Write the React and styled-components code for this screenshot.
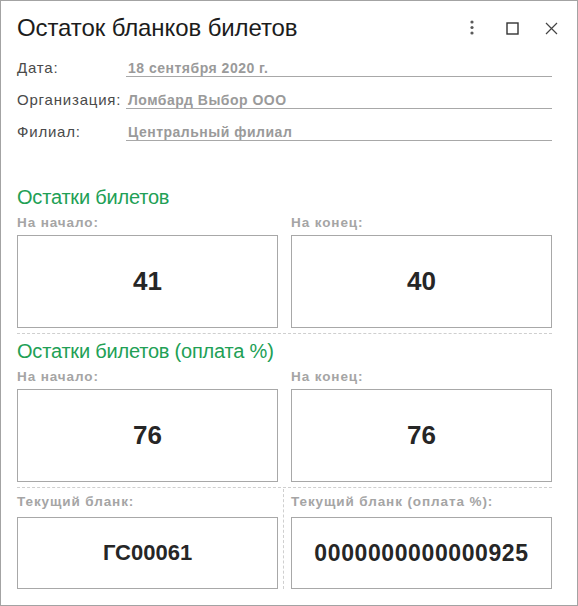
import React from 'react'
import styled, { createGlobalStyle } from 'styled-components'

const GlobalStyle = createGlobalStyle`
  html, body {
    margin: 0;
    padding: 0;
    background: #ffffff;
  }
  body {
    font-family: "Liberation Sans", Arial, sans-serif;
  }
`

const fields = [
  { label: 'Дата:', value: '18 сентября 2020 г.' },
  { label: 'Организация:', value: 'Ломбард Выбор ООО' },
  { label: 'Филиал:', value: 'Центральный филиал' },
]

function KebabIcon() {
  return (
    <svg width="6" height="16" viewBox="0 0 6 16" style={{ marginRight: 3 }}>
      <circle cx="3" cy="2" r="1.6" fill="#5a5a5a" />
      <circle cx="3" cy="7.5" r="1.6" fill="#5a5a5a" />
      <circle cx="3" cy="13" r="1.6" fill="#5a5a5a" />
    </svg>
  )
}

function MaximizeIcon() {
  return (
    <svg width="13" height="13" viewBox="0 0 13 13">
      <rect x="1" y="1" width="11" height="11" fill="none" stroke="#333" strokeWidth="1.4" />
    </svg>
  )
}

function CloseIcon() {
  return (
    <svg width="13" height="13" viewBox="0 0 13 13">
      <path d="M1 1 L12 12 M12 1 L1 12" stroke="#444" strokeWidth="1.2" fill="none" />
    </svg>
  )
}

function App() {
  return (
    <>
      <GlobalStyle />
      <Window>
        <Header>
          <Title>Остаток бланков билетов</Title>
          <HeaderButtons>
            <IconButton><KebabIcon /></IconButton>
            <IconButton><MaximizeIcon /></IconButton>
            <IconButton><CloseIcon /></IconButton>
          </HeaderButtons>
        </Header>

        <Fields>
          {fields.map(({ label, value }) => (
            <FieldRow key={label}>
              <FieldLabel>{label}</FieldLabel>
              <FieldValue>{value}</FieldValue>
            </FieldRow>
          ))}
        </Fields>

        <SectionTitle first>Остатки билетов</SectionTitle>
        <Pair>
          <Cell>
            <CellLabel>На начало:</CellLabel>
            <Box>41</Box>
          </Cell>
          <Cell>
            <CellLabel>На конец:</CellLabel>
            <Box>40</Box>
          </Cell>
        </Pair>

        <Separator />

        <SectionTitle>Остатки билетов (оплата %)</SectionTitle>
        <Pair>
          <Cell>
            <CellLabel>На начало:</CellLabel>
            <Box>76</Box>
          </Cell>
          <Cell>
            <CellLabel>На конец:</CellLabel>
            <Box>76</Box>
          </Cell>
        </Pair>

        <Separator />

        <BottomPair>
          <Cell bottom>
            <CellLabel bottom>Текущий бланк:</CellLabel>
            <Box small>ГС00061</Box>
          </Cell>
          <VDivider />
          <Cell bottom>
            <CellLabel bottom>Текущий бланк (оплата %):</CellLabel>
            <Box small wide>0000000000000925</Box>
          </Cell>
        </BottomPair>
      </Window>
    </>
  )
}

export default App

const Window = styled.div`
  width: 578px;
  height: 606px;
  box-sizing: border-box;
  border: 1px solid #a3a3a3;
  padding: 14px 25px 0 16px;
  display: flex;
  flex-direction: column;
  background: #fff;
  overflow: hidden;
`

const Header = styled.div`
  display: flex;
  align-items: center;
  justify-content: space-between;
  height: 26px;
  margin-right: -19px;
`

const Title = styled.div`
  font-size: 24px;
  line-height: 26px;
  letter-spacing: -0.1px;
  color: #1c1c1c;
  white-space: nowrap;
`

const HeaderButtons = styled.div`
  display: flex;
  align-items: center;
`

const IconButton = styled.div`
  width: 39px;
  height: 26px;
  display: flex;
  align-items: center;
  justify-content: center;
`

const Fields = styled.div`
  margin-top: 4px;
  display: flex;
  flex-direction: column;
`

const FieldRow = styled.div`
  display: grid;
  grid-template-columns: 109px 1fr;
  height: 32px;
`

const FieldLabel = styled.div`
  padding-top: 15px;
  font-size: 15px;
  line-height: 16px;
  letter-spacing: 0.8px;
  color: #4a4a4a;
  white-space: nowrap;
`

const FieldValue = styled.div`
  padding: 15px 0 0 2px;
  height: 16px;
  border-bottom: 1px solid #a8a8a8;
  font-size: 14px;
  font-weight: bold;
  line-height: 16px;
  letter-spacing: 0.5px;
  color: #9a9a9a;
  white-space: nowrap;
`

const SectionTitle = styled.div`
  margin-top: ${(p) => (p.first ? '44px' : '5px')};
  font-size: 20px;
  line-height: 24px;
  letter-spacing: -0.2px;
  color: #21a055;
  white-space: nowrap;
`

const Pair = styled.div`
  margin-top: 6px;
  display: grid;
  grid-template-columns: 261px 1fr;
  column-gap: 13px;
`

const BottomPair = styled.div`
  display: grid;
  grid-template-columns: 261px auto 1fr;
`

const VDivider = styled.div`
  margin: 1px 7px 0 5px;
  border-left: 1px dashed #cfcfcf;
`

const Cell = styled.div`
  display: flex;
  flex-direction: column;
  padding-top: ${(p) => (p.bottom ? '6px' : '0')};
`

const CellLabel = styled.div`
  font-size: 13.5px;
  font-weight: bold;
  line-height: 16px;
  letter-spacing: 0.9px;
  color: #a5a5a5;
  white-space: nowrap;
  margin-bottom: ${(p) => (p.bottom ? '7px' : '4px')};
`

const Box = styled.div`
  height: ${(p) => (p.small ? '70px' : '91px')};
  border: 1px solid #a8a8a8;
  display: flex;
  align-items: center;
  justify-content: center;
  font-size: ${(p) => (p.wide ? '23px' : p.small ? '22px' : '26px')};
  letter-spacing: ${(p) => (p.wide ? '0.6px' : '0')};
  font-weight: bold;
  color: #262626;
`

const Separator = styled.div`
  margin-top: 5px;
  border-top: 1px dashed #cfcfcf;
`
